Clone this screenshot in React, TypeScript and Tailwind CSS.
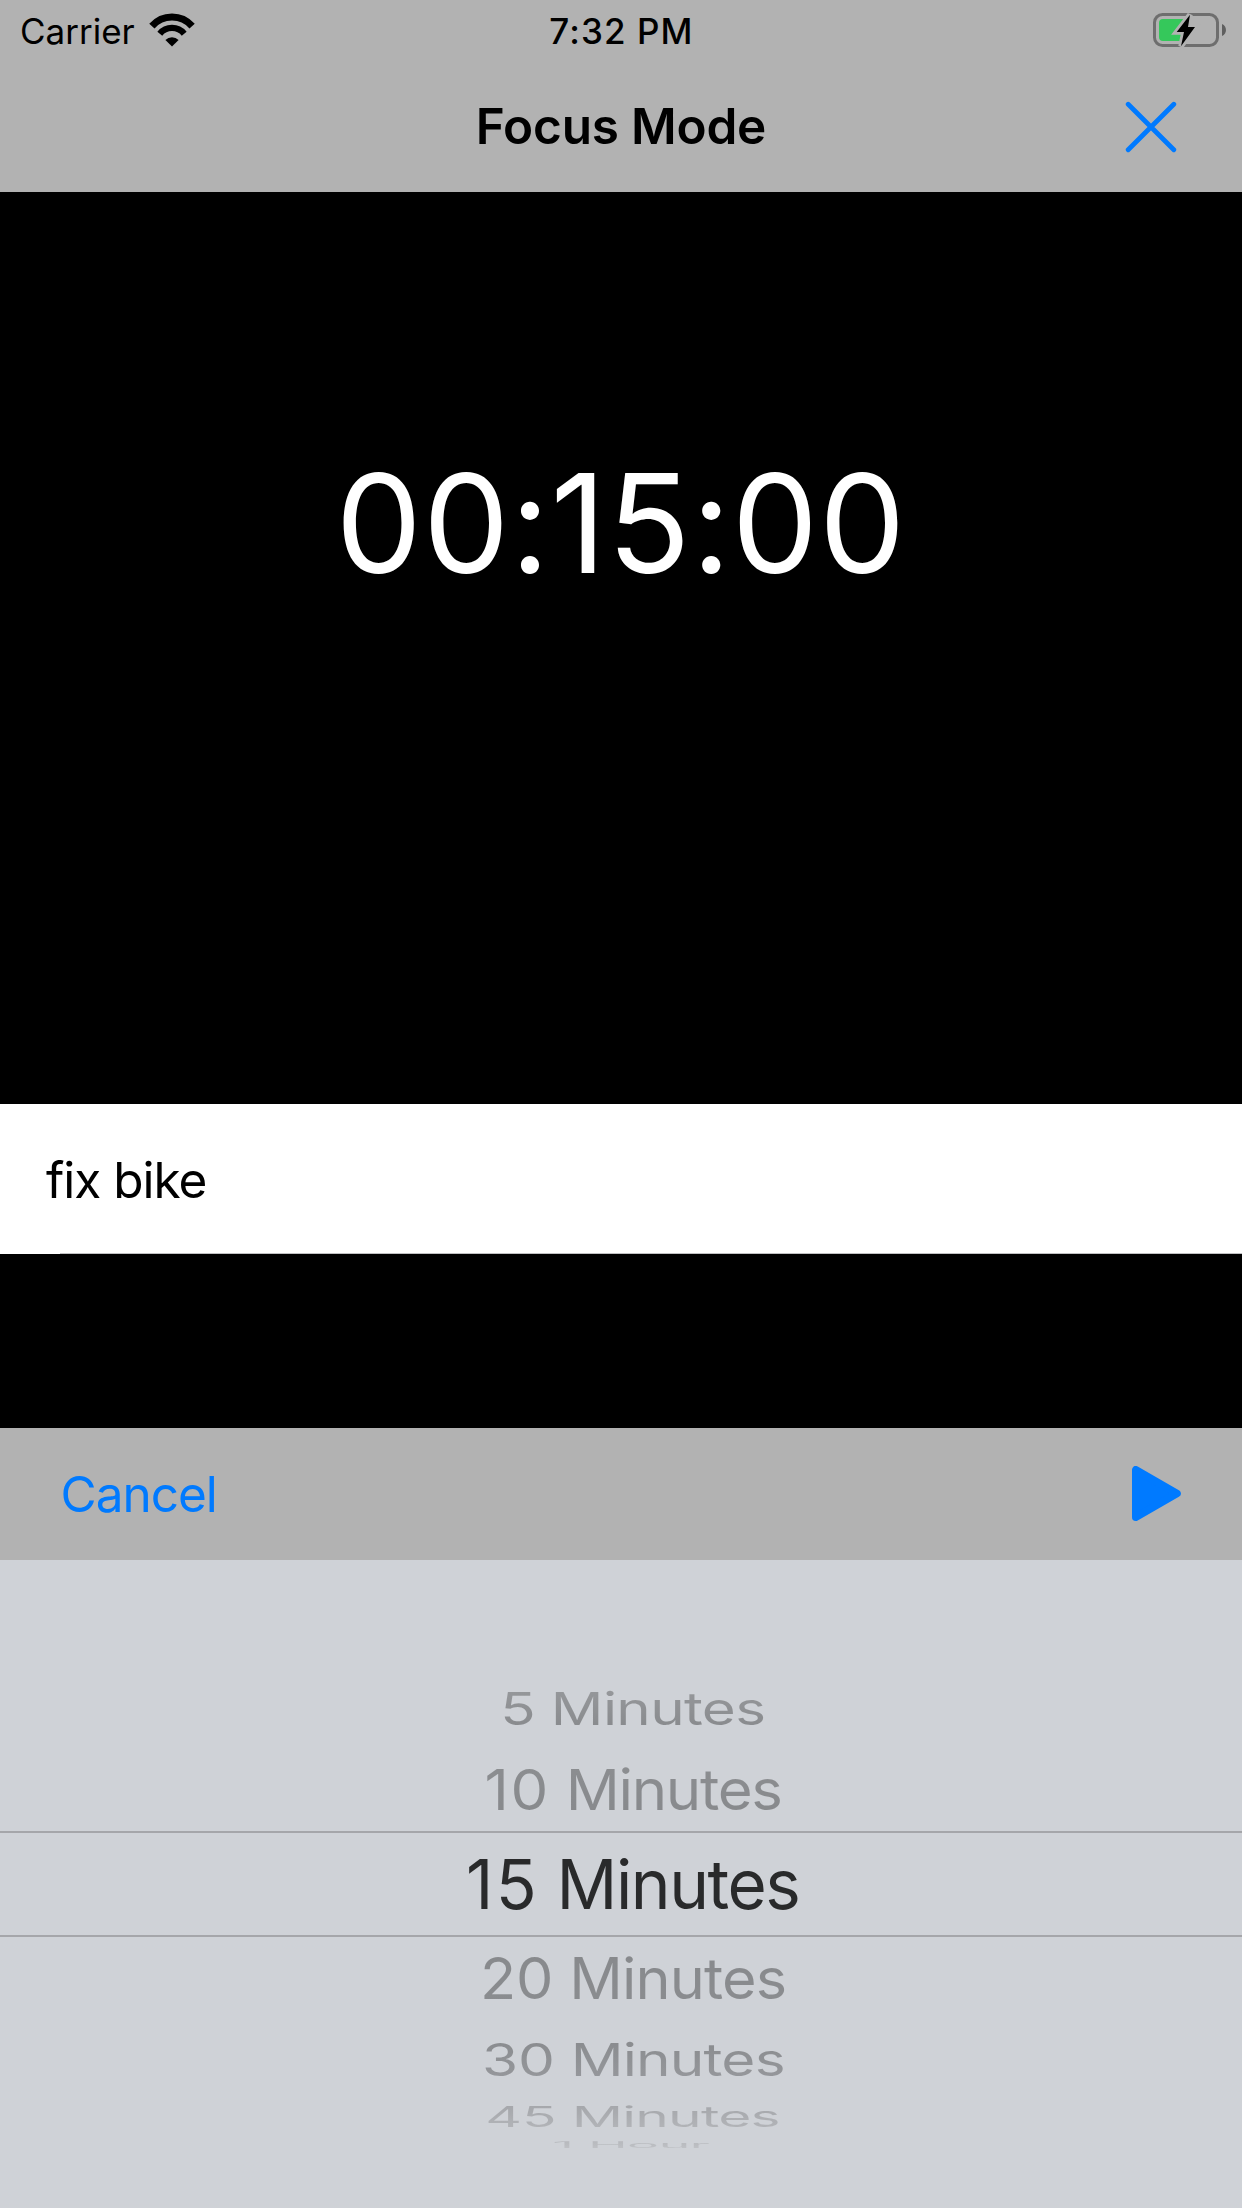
function WifiIcon() {
  return (
    <svg className="h-[34px] w-[46px]" viewBox="149 12.5 46 34" fill="none" stroke="black">
      <path d="M151.9 25.6A26.7 26.7 0 0 1 192.1 25.6" strokeWidth="7" />
      <path d="M159.8 33.2A15.8 15.8 0 0 1 184.2 33.2" strokeWidth="6.3" />
      <path d="M165.4 39.5A9.6 9.6 0 0 1 178.6 39.5L172 46Z" fill="black" stroke="none" />
    </svg>
  );
}

function BatteryIcon() {
  const bolt = 'M1190 14.7L1176.7 32H1184L1181 46.3L1195 27H1188Z';
  return (
    <svg className="h-[36px] w-[75px]" viewBox="1152 12 75 36">
      <rect x="1154.5" y="14.5" width="63" height="31" rx="8" fill="none" stroke="#6e6e6e" strokeWidth="3" />
      <path d="M1222 24C1227.3 26 1227.3 34 1222 36Z" fill="#5f5f5f" />
      <path
        d="M1163 19H1183V41H1163A4 4 0 0 1 1159 37V23A4 4 0 0 1 1163 19Z"
        fill="#35c85b"
      />
      <path d={bolt} fill="#b2b2b2" stroke="#b2b2b2" strokeWidth="5.5" />
      <path d={bolt} fill="black" />
    </svg>
  );
}

function CloseIcon() {
  return (
    <svg className="size-[52px]" viewBox="0 0 52 52" fill="none" stroke="#007aff" strokeWidth="4.8" strokeLinecap="round">
      <path d="M3.2 3.2L48.8 48.8M48.8 3.2L3.2 48.8" />
    </svg>
  );
}

function PlayIcon() {
  return (
    <svg className="h-[56px] w-[50px]" viewBox="0 0 50 56">
      <path
        d="M3.8 3.8V51.2L45 27.5Z"
        fill="#007aff"
        stroke="#007aff"
        strokeWidth="7.6"
        strokeLinejoin="round"
      />
    </svg>
  );
}

const rows = [
  {
    count: '5',
    row: 'h-[79px]',
    digits: 'tracking-[-0.7px]',
    text: 'tracking-[-0.8px] scale-x-[0.851] scale-y-[0.655] from-[#97999c] to-[#87898c]',
  },
  {
    count: '10',
    row: 'h-[83px]',
    digits: 'tracking-[2px]',
    text: 'tracking-[-1.5px] scale-x-[0.874] scale-y-[0.83] from-[#8c8e91] to-[#87898c]',
  },
  {
    count: '15',
    row: 'h-[106px]',
    digits: 'tracking-[2.4px]',
    text: 'tracking-[-1.5px] scale-x-[0.982] from-[#292a2b] to-[#292a2b]',
  },
  {
    count: '20',
    row: 'h-[82px]',
    digits: 'tracking-[0px]',
    text: 'tracking-[-1px] scale-x-[0.865] scale-y-[0.836] from-[#87898c] to-[#8b8d90]',
  },
  {
    count: '30',
    row: 'h-[80px]',
    digits: 'tracking-[0px]',
    text: 'tracking-[-1px] scale-x-[0.854] scale-y-[0.65] from-[#898b8e] to-[#97999d]',
  },
  {
    count: '45',
    row: 'h-[35px] mr-px',
    digits: 'tracking-[0px]',
    text: 'tracking-[-1px] scale-x-[0.83] scale-y-[0.41] from-[#a4a6aa] to-[#b4b6ba]',
  },
];

const rowText = 'shrink-0 bg-linear-to-b bg-clip-text text-[68.6px] leading-none whitespace-nowrap text-transparent';

function DurationPicker() {
  return (
    <section className="relative h-[648px] bg-[#cfd2d7] pt-[110px]">
      <div className="absolute inset-x-0 top-[271px] h-[106px] border-y-2 border-[#a5a6aa]" />
      <div className="relative flex flex-col pl-[24px]">
        {rows.map((r) => (
          <div key={r.count} className={`flex items-center justify-center ${r.row}`}>
            <span className={`${rowText} ${r.text}`}>
              <span className={r.digits}>{r.count}</span> Minutes
            </span>
          </div>
        ))}
        <div className="mr-[5px] flex h-[21px] items-center justify-center">
          <span className={`${rowText} scale-x-[0.78] scale-y-[0.12] tracking-[-0.7px] from-[#b7b9bd] to-[#c0c2c6]`}>
            1 Hour
          </span>
        </div>
      </div>
    </section>
  );
}

export default function App() {
  return (
    <main className="flex h-[2208px] w-[1242px] flex-col overflow-hidden bg-black font-['Inter',sans-serif] text-black">
      <header className="h-[192px] bg-[#b2b2b2]">
        <div className="grid h-[60px] grid-cols-3 items-center pr-[15px] pl-[20px]">
          <div className="flex items-center gap-[14px]">
            <span className="pt-[3px] text-[35px] leading-none">Carrier</span>
            <WifiIcon />
          </div>
          <span className="pt-[3px] pr-[4px] text-center text-[35px] leading-none font-[550] tracking-[1.1px]">7:32 PM</span>
          <div className="flex justify-end">
            <BatteryIcon />
          </div>
        </div>
        <div className="grid h-[132px] grid-cols-[1fr_auto_1fr] items-center pr-[65.5px] pl-[65.5px]">
          <h1 className="col-start-2 pt-[2px] text-[49.5px] leading-none font-semibold tracking-[-0.2px]">Focus Mode</h1>
          <button className="justify-self-end pt-px" aria-label="Close">
            <CloseIcon />
          </button>
        </div>
      </header>

      <section className="flex h-[912px] flex-col">
        <div className="flex h-[662px] items-center justify-center">
          <span className="text-[137px] leading-none tracking-[0.9px] whitespace-nowrap text-white">00:15:00</span>
        </div>
      </section>

      <section className="flex h-[150px] flex-col bg-white">
        <div className="flex grow items-center pt-[4px] pl-[46px] text-[49.5px] leading-none tracking-[-1px]">fix bike</div>
        <div className="ml-[60px] h-px bg-[#c0c0c2]" />
      </section>

      <section className="mt-[174px] flex h-[132px] shrink-0 items-center justify-between bg-[#b2b2b2] pr-[60px] pl-[60.5px]">
        <button className="pt-[2px] text-[49.5px] leading-none tracking-[-1px] text-[#007aff]">Cancel</button>
        <button aria-label="Start">
          <PlayIcon />
        </button>
      </section>

      <DurationPicker />
    </main>
  );
}
